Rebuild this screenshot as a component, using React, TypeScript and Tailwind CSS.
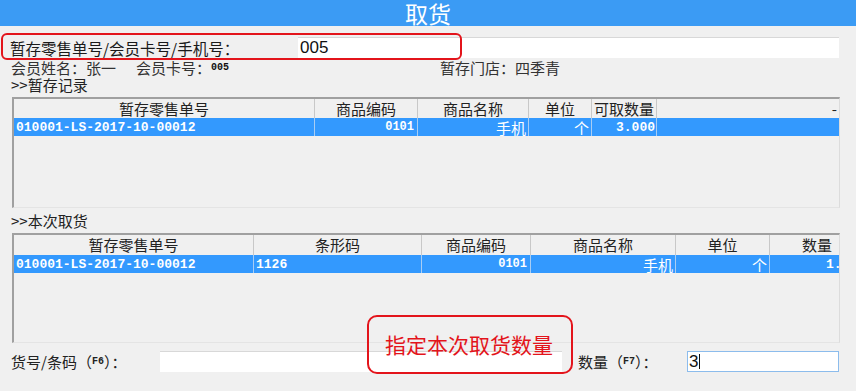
import React from 'react';

const cjk = "font-['Noto_Sans_CJK_SC','Liberation_Sans',sans-serif]";
const mono = "font-['Liberation_Mono',monospace] font-bold";

const Head = ({ children, className = '' }: { children: React.ReactNode; className?: string }) => (
    <div className={`flex items-center justify-center border-r border-[#c8c8c8] text-[15px] text-[#222] leading-[18px] ${className}`}>
        {children}
    </div>
);

const Cell = ({ children, className = '' }: { children?: React.ReactNode; className?: string }) => (
    <div className={`flex items-center border-r border-[#a9cdf3] text-white leading-[17px] overflow-hidden whitespace-nowrap ${className}`}>
        {children}
    </div>
);

export default function App() {
    return (
        <div className={`relative w-[856px] h-[391px] overflow-hidden bg-[#f0f0f0] ${cjk}`}>
            {/* Title */}
            <div className="h-[26px] bg-[#3b9bf4] flex items-center justify-center text-white text-[23px] leading-[26px]">
                取货
            </div>

            {/* Search row */}
            <div className="flex items-center h-[21px] mt-[11px] pl-[10px]">
                <div className="w-[288px] text-[15.5px] text-[#1a1a1a] leading-[20px] whitespace-nowrap">暂存零售单号/会员卡号/手机号：</div>
                <div className="w-[541px] h-[21px] bg-white border-t border-[#d8d8d8] flex items-center pl-[2px] font-['Liberation_Sans',sans-serif] text-[17px] text-[#111] leading-[20px]">
                    005
                </div>
            </div>

            {/* Member info */}
            <div className="flex items-center h-[17px] mt-[1px] pl-[11px] text-[15px] text-[#333] leading-[17px] whitespace-nowrap">
                <span>会员姓名：张一</span>
                <span className="ml-[20px]">会员卡号：</span>
                <span className={`${mono} text-[10px] text-[#111]`}>005</span>
                <span className="ml-[211px]">暂存门店：四季青</span>
            </div>
            <div className="h-[18px] flex items-center pl-[11px] text-[15px] text-[#222] leading-[18px]">&gt;&gt;暂存记录</div>

            {/* Stored records table */}
            <div className="ml-[12px] mt-[3px] w-[828px] h-[111px] border-t-2 border-l-2 border-[#a0a0a0] border-r border-b border-r-[#dcdcdc] border-b-[#e4e4e4]">
                <div className="grid grid-cols-[301px_103px_111px_63px_65px_1fr] h-[19px] bg-[#f0f0f0]">
                    <Head>暂存零售单号</Head>
                    <Head>商品编码</Head>
                    <Head>商品名称</Head>
                    <Head>单位</Head>
                    <Head>可取数量</Head>
                    <Head className="border-r-0 justify-end pr-[2px] text-[9px]">-</Head>
                </div>
                <div className="grid grid-cols-[301px_103px_111px_63px_65px_1fr] h-[18px] bg-[#3399fe]">
                    <Cell className={`${mono} text-[13px] pl-[2px]`}>010001-LS-2017-10-00012</Cell>
                    <Cell className={`${mono} text-[12px] justify-end pr-[3px]`}>0101</Cell>
                    <Cell className="text-[15px] justify-end pr-[2px]">手机</Cell>
                    <Cell className="text-[15px] justify-end pr-[2px]">个</Cell>
                    <Cell className={`${mono} text-[13px] justify-end pr-[1px]`}>3.000</Cell>
                    <Cell className="border-r-0" />
                </div>
            </div>

            <div className="h-[18px] mt-[4px] flex items-center pl-[11px] text-[15px] text-[#222] leading-[18px]">&gt;&gt;本次取货</div>

            {/* This pickup table */}
            <div className="ml-[12px] mt-[3px] w-[828px] h-[110px] overflow-hidden border-t-2 border-l-2 border-[#a0a0a0] border-r border-b border-r-[#dcdcdc] border-b-[#e4e4e4]">
                <div className="w-[860px]">
                    <div className="grid grid-cols-[240px_168px_109px_145px_94px_104px] h-[20px] bg-[#f0f0f0]">
                        <Head>暂存零售单号</Head>
                        <Head>条形码</Head>
                        <Head>商品编码</Head>
                        <Head>商品名称</Head>
                        <Head>单位</Head>
                        <Head className="border-r-0 justify-start pl-[32px]">数量</Head>
                    </div>
                    <div className="grid grid-cols-[240px_168px_109px_145px_94px_104px] h-[18px] bg-[#3399fe]">
                        <Cell className={`${mono} text-[13px] pl-[2px]`}>010001-LS-2017-10-00012</Cell>
                        <Cell className={`${mono} text-[13px] pl-[2px]`}>1126</Cell>
                        <Cell className={`${mono} text-[12px] justify-end pr-[3px]`}>0101</Cell>
                        <Cell className="text-[15px] justify-end pr-[2px]">手机</Cell>
                        <Cell className="text-[15px] justify-end pr-[2px]">个</Cell>
                        <Cell className={`${mono} text-[13px] pl-[56px] border-r-0`}>1.000</Cell>
                    </div>
                </div>
            </div>

            {/* Bottom inputs */}
            <div className="flex items-center h-[21px] mt-[8px] pl-[11px] text-[15px] text-[#222] leading-[20px] whitespace-nowrap">
                <div className="w-[149px] flex items-center">
                    货号/条码（<span className={`${mono} text-[10px]`}>F6</span>）：
                </div>
                <div className="w-[402px] h-[21px] bg-white border-t border-[#d8d8d8]" />
                <div className="ml-[16px] w-[109px] flex items-center">
                    数量（<span className={`${mono} text-[10px]`}>F7</span>）：
                </div>
                <div className="w-[152px] h-[21px] bg-white border border-[#8cbcec] flex items-center pl-[1px] font-['Liberation_Sans',sans-serif] text-[17px] text-[#111]">
                    3<span className="inline-block w-px h-[15px] bg-[#111] ml-px" />
                </div>
            </div>

            {/* Callouts */}
            <div className="absolute left-[1px] top-[33px] w-[461px] h-[27px] border-2 border-[#e3141b] rounded-[6px]" />
            <div className="absolute left-[367px] top-[315px] w-[206px] h-[59px] border-2 border-[#e3141b] rounded-[10px] flex items-center pl-[16px] pb-[2px] text-[21px] text-[#e3141b] leading-[24px] whitespace-nowrap">
                指定本次取货数量
            </div>
        </div>
    );
}
